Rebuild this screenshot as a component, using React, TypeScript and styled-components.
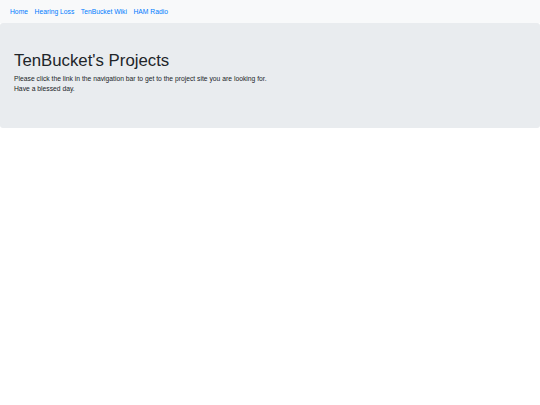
import { createGlobalStyle } from "styled-components";
import styled from "styled-components";

const GlobalStyle = createGlobalStyle`
  html, body {
    margin: 0;
    padding: 0;
    background: #ffffff;
  }
  body {
    font-family: "Liberation Sans", Arial, sans-serif;
    color: #212529;
  }
`;

const links = ["Home", "Hearing Loss", "TenBucket Wiki", "HAM Radio"];

export default function App() {
  return (
    <>
      <GlobalStyle />
      <StyledNavbar>
        {links.map((label) => (
          <NavLink key={label} href="#">
            {label}
          </NavLink>
        ))}
      </StyledNavbar>
      <Jumbotron>
        <Title>TenBucket's Projects</Title>
        <Lead>
          Please click the link in the navigation bar to get to the project site you are looking for.
          <br />
          Have a blessed day.
        </Lead>
      </Jumbotron>
    </>
  );
}

const StyledNavbar = styled.nav`
  display: flex;
  align-items: center;
  gap: 6.5px;
  height: 23px;
  padding: 0 10px;
  background: #f8f9fa;
`;

const NavLink = styled.a`
  font-size: 6.75px;
  color: #007bff;
  text-decoration: none;
`;

const Jumbotron = styled.section`
  height: 105px;
  box-sizing: border-box;
  padding: 28px 14px 0;
  background: #e9ecef;
  border-radius: 3px;
`;

const Title = styled.h1`
  margin: 0 0 3.3px;
  font-size: 16.8px;
  font-weight: 400;
  line-height: 1.2;
`;

const Lead = styled.p`
  margin: 0;
  font-size: 6.75px;
  line-height: 10px;
`;
